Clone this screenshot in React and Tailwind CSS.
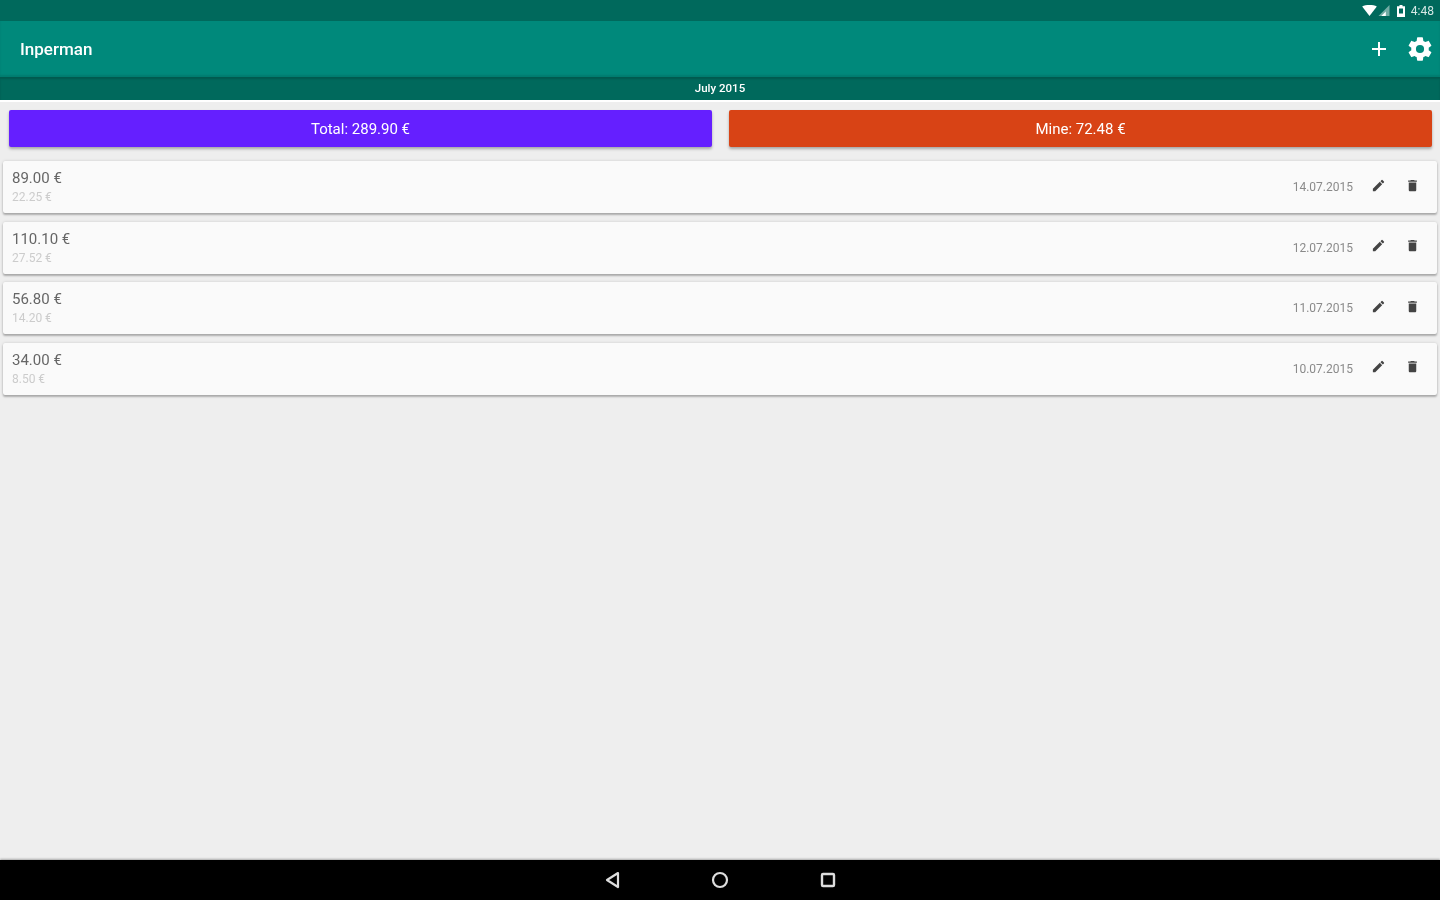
import React from "react";

const rows = [
  ["89.00 €", "22.25 €", "14.07.2015"],
  ["110.10 €", "27.52 €", "12.07.2015"],
  ["56.80 €", "14.20 €", "11.07.2015"],
  ["34.00 €", "8.50 €", "10.07.2015"],
];

function Pencil() {
  return (
    <svg viewBox="0 0 24 24" className="w-[15px] h-[15px]" fill="#444">
      <path d="M3 17.25V21h3.75L17.81 9.94l-3.75-3.75L3 17.25zM20.71 7.04a1 1 0 0 0 0-1.41l-2.34-2.34a1 1 0 0 0-1.41 0l-1.83 1.83 3.75 3.75 1.83-1.83z" />
    </svg>
  );
}

function Trash() {
  return (
    <svg viewBox="0 0 24 24" className="w-[15px] h-[15px]" fill="#444">
      <path d="M6 19c0 1.1.9 2 2 2h8c1.1 0 2-.9 2-2V7H6v12zM19 4h-3.5l-1-1h-5l-1 1H5v2h14V4z" />
    </svg>
  );
}

function Row({ a, b, d }) {
  return (
    <div className="h-[52px] bg-[#fafafa] rounded-[2px] shadow-[0_2px_2px_rgba(0,0,0,0.25),0_0_3px_rgba(0,0,0,0.15)] flex items-center pl-[9px]">
      <div className="flex flex-col w-[200px] blur-[0.6px]">
        <span className="text-[15px] leading-[19px] text-[#666] pt-[1px]">{a}</span>
        <span className="text-[12px] leading-[18px] text-[#ccc]">{b}</span>
      </div>
      <div className="flex-1" />
      <span className="text-[12px] text-[#8a8a8a] blur-[0.6px]">{d}</span>
      <div className="flex items-center ml-[18px] mr-[17px] gap-[19px] mb-[4px] blur-[0.4px]">
        <Pencil />
        <Trash />
      </div>
    </div>
  );
}

export default function App() {
  return (
    <div className="w-[1440px] h-[900px] flex flex-col bg-[#eeeeee] overflow-hidden font-['Roboto','Liberation_Sans',sans-serif]">
      <div className="h-[21px] bg-[#00695c] flex items-center justify-end pr-[6px] text-white blur-[0.5px]">
        <svg viewBox="0 0 16 12" className="w-[15px] h-[11px] mr-[1px]" fill="white"><path d="M0 1.5 C4 -0.5 12 -0.5 16 1.5 L8 12 Z" /></svg>
        <svg viewBox="0 0 12 12" className="w-[12px] h-[11px] mr-[7px]"><path d="M0 12 L12 0 V12 Z" fill="white" fillOpacity="0.45" /><path d="M3 12 L8 7 V12 Z" fill="white" /></svg>
        <svg viewBox="0 0 8 12" className="w-[8px] h-[12px] mr-[6px]"><path d="M2.5 0h3v1.2H8V12H0V1.2h2.5z" fill="white" /><rect x="2" y="3.5" width="4" height="5" fill="#00695c" /></svg>
        <span className="text-[12px] leading-none text-[#d5e8e5] pt-[1px]">4:48</span>
      </div>
      <div className="h-[56px] bg-[#00897b] flex items-center px-[20px] shadow-[inset_0_-2px_2px_rgba(0,0,0,0.1)]">
        <span className="text-[17px] font-medium text-white blur-[0.5px] pt-[1px]">Inperman</span>
        <div className="flex-1" />
        <svg viewBox="0 0 24 24" className="w-[24px] h-[24px] text-white mr-[15px] blur-[0.3px]" fill="currentColor"><path d="M19 13h-6v6h-2v-6H5v-2h6V5h2v6h6v2z" /></svg>
        <svg viewBox="0 0 24 24" className="w-[28px] h-[28px] text-white mr-[-14px] blur-[0.3px]" fill="currentColor"><path d="M19.43 12.98c.04-.32.07-.64.07-.98s-.03-.66-.07-.98l2.11-1.65c.19-.15.24-.42.12-.64l-2-3.46c-.12-.22-.39-.3-.61-.22l-2.49 1c-.52-.4-1.08-.73-1.69-.98l-.38-2.65A.49.49 0 0 0 14 2h-4c-.25 0-.46.18-.49.42l-.38 2.65c-.61.25-1.17.59-1.69.98l-2.49-1c-.23-.09-.49 0-.61.22l-2 3.46c-.13.22-.07.49.12.64l2.11 1.65c-.04.32-.07.65-.07.98s.03.66.07.98l-2.11 1.65c-.19.15-.24.42-.12.64l2 3.46c.12.22.39.3.61.22l2.49-1c.52.4 1.08.73 1.69.98l.38 2.65c.03.24.24.42.49.42h4c.25 0 .46-.18.49-.42l.38-2.65c.61-.25 1.17-.59 1.69-.98l2.49 1c.23.09.49 0 .61-.22l2-3.46c.12-.22.07-.49-.12-.64l-2.11-1.65zM12 15.5a3.5 3.5 0 1 1 0-7 3.5 3.5 0 0 1 0 7z" /></svg>
      </div>
      <div className="h-[23px] bg-[#00695c] flex items-center justify-center shadow-[inset_0_2px_2px_rgba(0,0,0,0.15)]">
        <span className="text-[11.5px] font-medium text-white blur-[0.4px] pt-[1px]">July 2015</span>
      </div>
      <div className="h-[2px] bg-white" />
      <div className="flex-1 flex flex-col">
        <div className="flex gap-[17px] pl-[9px] pr-[8px] pt-[8px]">
          <div className="flex-1 h-[37px] rounded-[2px] bg-[#651fff] flex items-center justify-center text-white text-[15px] shadow-[0_2px_3px_rgba(0,0,0,0.3)]">
            <span className="blur-[0.5px] pt-[1px]">Total: 289.90 €</span>
          </div>
          <div className="flex-1 h-[37px] rounded-[2px] bg-[#d84315] flex items-center justify-center text-white text-[15px] shadow-[0_2px_3px_rgba(0,0,0,0.3)]">
            <span className="blur-[0.5px] pt-[1px]">Mine: 72.48 €</span>
          </div>
        </div>
        <div className="flex flex-col gap-[8.67px] px-[3px] pt-[14px]">
          {rows.map((r) => (
            <Row key={r[2]} a={r[0]} b={r[1]} d={r[2]} />
          ))}
        </div>
      </div>
      <div className="h-[40px] bg-black flex items-center justify-center gap-[88px] shadow-[0_-1px_2px_rgba(0,0,0,0.3)] blur-[0.4px]">
        <svg viewBox="0 0 20 20" className="w-[20px] h-[20px]" fill="none" stroke="#ddd" strokeWidth="2.2" strokeLinejoin="round"><path d="M16 3 L5 10 L16 17 Z" /></svg>
        <svg viewBox="0 0 20 20" className="w-[20px] h-[20px]" fill="none" stroke="#ddd" strokeWidth="2.2"><circle cx="10" cy="10" r="7" /></svg>
        <svg viewBox="0 0 20 20" className="w-[20px] h-[20px]" fill="none" stroke="#ddd" strokeWidth="2.4"><rect x="4" y="4" width="12" height="12" rx="1" /></svg>
      </div>
    </div>
  );
}
